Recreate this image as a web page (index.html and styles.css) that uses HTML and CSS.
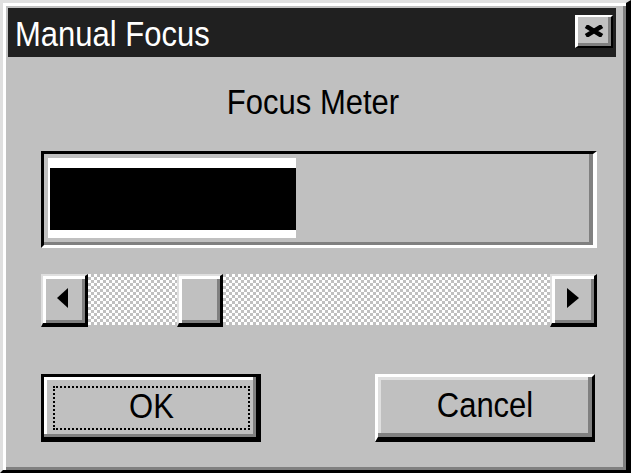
FILE: index.html
```html
<!DOCTYPE html>
<html>
<head>
<meta charset="utf-8">
<title>Manual Focus</title>
<link rel="stylesheet" href="styles.css">
</head>
<body>
<div class="window">
  <div class="titlebar">
    <span class="title txt">Manual Focus</span>
    <div class="close">
      <svg width="20" height="12" viewBox="0 0 20 12"><path d="M2 1 L18 11 M18 1 L2 11" stroke="#000" stroke-width="4.5" fill="none"/></svg>
    </div>
  </div>
  <div class="content">
    <div class="label"><span class="txt">Focus Meter</span></div>
    <div class="meter">
      <div class="meter-chunk">
        <div class="meter-fill" style="width: 246px"></div>
      </div>
    </div>
    <div class="scrollbar">
      <div class="sb-btn sb-left">
        <svg width="11" height="20" viewBox="0 0 11 20"><polygon points="11,0 0,10 11,20" fill="#000"/></svg>
      </div>
      <div class="sb-track">
        <div class="sb-thumb"></div>
      </div>
      <div class="sb-btn sb-right">
        <svg width="12" height="20" viewBox="0 0 12 20"><polygon points="0,0 12,10 0,20" fill="#000"/></svg>
      </div>
    </div>
    <div class="buttons">
      <div class="btn btn-default"><div class="focus"><span class="txt">OK</span></div></div>
      <div class="btn btn-cancel"><span class="txt">Cancel</span></div>
    </div>
  </div>
</div>
</body>
</html>
```

FILE: styles.css
```css
html, body {
  margin: 0;
  padding: 0;
  background: #c0c0c0;
}

.window {
  width: 631px;
  height: 473px;
  box-sizing: border-box;
  background: #c0c0c0;
  border-style: solid;
  border-width: 3px 5px 3px 3px;
  border-color: #dfdfdf #000 #000 #dfdfdf;
  box-shadow: inset 3px 3px #fff, inset -3px -3px #808080;
  font-family: "Liberation Sans", Arial, sans-serif;
  font-size: 31px;
  color: #000;
}

.txt {
  display: inline-block;
  line-height: 36px;
  transform: scaleY(1.12);
  transform-origin: 50% 80%;
}

.titlebar {
  margin: 5px 10px 0 5px;
  height: 49px;
  background: #202020;
  display: flex;
  align-items: flex-start;
  justify-content: space-between;
}

.title {
  color: #fff;
  margin: 10px 0 0 7px;
}

.close {
  width: 38px;
  height: 33px;
  box-sizing: border-box;
  margin: 7px 3px 0 0;
  background: #c0c0c0;
  border-style: solid;
  border-width: 2px 2px 2px 3px;
  border-color: #fff #000 #000 #fff;
  box-shadow: inset -3px -3px #808080;
  display: flex;
  align-items: center;
  justify-content: center;
  padding: 0 2px 2px 0;
}

.close svg {
  display: block;
}

.content {
  margin-left: 38px;
  width: 556px;
}

.label {
  line-height: 36px;
  height: 36px;
  margin-top: 29px;
  text-align: center;
  padding-right: 12px;
}

.meter {
  margin-top: 29px;
  height: 97px;
  box-sizing: border-box;
  border-style: solid;
  border-width: 3px 4px 3px 3px;
  border-color: #000 #fff #fff #000;
  box-shadow: inset -4px -3px #808080;
  padding: 4px 0 0 4px;
}

.meter-chunk {
  width: 248px;
  height: 80px;
  box-sizing: border-box;
  background: #fff;
  padding: 10px 0 0 2px;
}

.meter-fill {
  height: 62px;
  background: #000;
}

.scrollbar {
  margin-top: 26px;
  height: 53px;
  display: flex;
}

.sb-btn {
  width: 47px;
  height: 53px;
  box-sizing: border-box;
  background: #c0c0c0;
  border-style: solid;
  border-width: 2px 3px 4px 2px;
  border-color: #dfdfdf #000 #000 #dfdfdf;
  box-shadow: inset 3px 3px #fff, inset -3px -3px #808080;
  display: flex;
  align-items: center;
  justify-content: center;
  flex-shrink: 0;
}

.sb-btn svg {
  display: block;
}

.sb-left {
  padding: 0 4px 3px 0;
}

.sb-right {
  padding: 0 1px 3px 0;
}

.sb-track {
  flex: 1;
  height: 51px;
  background-color: #fff;
  background-image: conic-gradient(#c0c0c0 25%, #fff 0 50%, #c0c0c0 0 75%, #fff 0);
  background-size: 6px 6px;
  display: flex;
}

.sb-thumb {
  width: 46px;
  height: 53px;
  margin-left: 89px;
  box-sizing: border-box;
  background: #c0c0c0;
  border-style: solid;
  border-width: 2px 3px 4px 2px;
  border-color: #dfdfdf #000 #000 #dfdfdf;
  box-shadow: inset 3px 3px #fff, inset -3px -3px #808080;
}

.buttons {
  margin-top: 47px;
  display: flex;
  justify-content: space-between;
  padding-right: 2px;
}

.btn {
  width: 220px;
  height: 68px;
  box-sizing: border-box;
  background: #c0c0c0;
  display: flex;
  align-items: center;
  justify-content: center;
  line-height: 36px;
}

.btn-default {
  border: 3px solid #000;
  box-shadow: inset -2px -2px #000, inset -5px -5px #808080, inset 3px 3px #fff;
  padding: 9px 8px 9px 9px;
}

.focus {
  flex: 1;
  align-self: stretch;
  border: 2px dotted #000;
  display: flex;
  align-items: center;
  justify-content: center;
}

.btn-cancel {
  border-style: solid;
  border-width: 3px 3px 5px 3px;
  border-color: #fff #000 #000 #fff;
  box-shadow: inset -4px -4px #808080, inset 3px 3px #dfdfdf;
  padding-bottom: 1px;
}
```
